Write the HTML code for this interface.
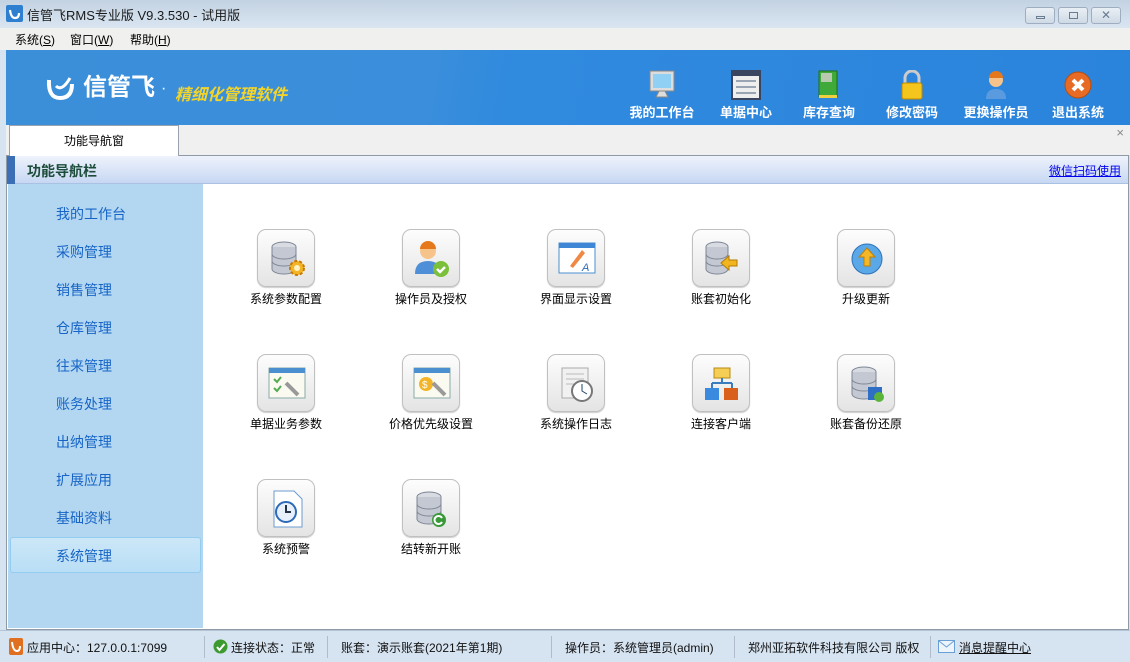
<!DOCTYPE html>
<html><head><meta charset="utf-8"><style>
*{margin:0;padding:0;box-sizing:border-box}
body{width:1130px;height:662px;overflow:hidden;background:#d6e3f1;font-family:"Liberation Sans","Noto Sans CJK SC",sans-serif;font-size:12px;position:relative}
.abs{position:absolute}
#title{left:0;top:0;width:1130px;height:28px;background:linear-gradient(#c3d2e2,#d9e5f1)}
#title .t{left:27px;top:5px;font-size:13px;color:#1a1a1a}
.wb{top:7px;height:17px;border:1px solid #9eadbf;border-radius:3px;background:linear-gradient(#e9eff5,#cfdae6)}
#menu{left:0;top:28px;width:1130px;height:22px;background:#f0f0ee}
#menu span{position:absolute;top:3px;font-size:12px;color:#000}
#banner{left:6px;top:50px;width:1124px;height:75px;background:linear-gradient(100deg,#3b8fd9 0%,#3a8edb 38%,#308ade 45%,#2b84dc 100%)}
.tb{position:absolute;top:20px;width:80px;text-align:center;color:#fff;font-weight:bold;font-size:13px}
.tb svg{display:block;margin:0 auto 2px}
#tabs{left:6px;top:125px;width:1124px;height:30px;background:#f0f0f0}
#tab{left:9px;top:125px;width:170px;height:31px;background:#fff;border:1px solid #9aa3ad;border-bottom:none;text-align:center;line-height:31px;font-size:12px}
#panel{left:6px;top:155px;width:1123px;height:475px;background:#fff;border:1px solid #8e9aa6}
#hdr{left:7px;top:156px;width:1121px;height:28px;background:linear-gradient(#eef3fc,#c7d8f3);border-bottom:1px solid #a9c1e2}
#hdr .bar{left:0;top:0;width:8px;height:28px;background:#3b6eb5}
#hdr .t{left:20px;top:5px;font-size:14px;font-weight:bold;color:#1c4c3a}
#hdr a{position:absolute;right:7px;top:6px;color:#0000ee;font-size:12px;text-decoration:underline}
#side{left:8px;top:184px;width:195px;height:444px;background:#b3d7f1}
#side div{position:absolute;left:48px;font-size:14px;color:#1764c6}
#sel{left:10px;top:537px;width:191px;height:36px;border:1px solid #94ccef;border-radius:3px;background:linear-gradient(#cce7f7,#b9def6)}
.ic{position:absolute;width:58px;height:58px;border:1px solid #c0c0c0;border-radius:9px;background:linear-gradient(#fdfdfd,#e4e4e4);box-shadow:0 1px 1px #ccc}
.ic svg{position:absolute;left:8px;top:8px}
.lb{position:absolute;width:140px;text-align:center;font-size:12px;color:#000}
#status{left:0;top:630px;width:1130px;height:32px;background:#d6e3f1;border-top:1px solid #b5c4d4}
#status span{position:absolute;top:8px;font-size:12px;color:#111}
.sep{position:absolute;top:5px;width:1px;height:22px;background:#b0bccb}
</style></head><body>
<div id="title" class="abs">
<svg class="abs" style="left:6px;top:5px" width="17" height="17"><rect width="17" height="17" rx="2" fill="#2f7fd0"/><path d="M4 5 Q5 13 9 13 Q13 13 13 8" stroke="#fff" stroke-width="2.2" fill="none"/></svg>
<div class="abs t">信管飞RMS专业版 V9.3.530 - 试用版</div>
<div class="abs wb" style="left:1025px;width:30px"><div class="abs" style="left:10px;top:8px;width:9px;height:3px;border:1px solid #6b7c90"></div></div>
<div class="abs wb" style="left:1058px;width:30px"><div class="abs" style="left:10px;top:4px;width:9px;height:7px;border:1px solid #6b7c90"></div></div>
<div class="abs wb" style="left:1091px;width:30px;text-align:center;color:#6b7c90;font-size:12px;line-height:15px">✕</div>
</div>
<div id="menu" class="abs"><span style="left:15px">系统(<u>S</u>)</span><span style="left:70px">窗口(<u>W</u>)</span><span style="left:130px">帮助(<u>H</u>)</span></div>
<div id="banner" class="abs">
<svg class="abs" style="left:40px;top:24px" width="30" height="28"><path d="M3 6 Q2 24 14 24 Q26 24 26 10" stroke="#fff" stroke-width="4" fill="none"/><path d="M10 12 Q16 18 24 4" stroke="#fff" stroke-width="3" fill="none"/></svg>
<div class="abs" style="left:77px;top:24px;color:#fff;font-size:24px;font-weight:bold;line-height:28px">信管飞</div>
<div class="abs" style="left:155px;top:30px;color:#fff;font-size:16px">·</div>
<div class="abs" style="left:169px;top:31px;color:#f3d42a;font-size:16px;font-style:italic;font-weight:bold">精细化管理软件</div>
<div class="tb" style="left:616px"><svg width="28" height="30"><rect x="2" y="1" width="24" height="20" fill="#ddd" stroke="#888"/><rect x="5" y="4" width="18" height="14" fill="#8fd0f4"/><path d="M8 27 h12 l-3 -6 h-6z" fill="#ddd" stroke="#888"/></svg>我的工作台</div>
<div class="tb" style="left:700px"><svg width="30" height="30"><rect x="1" y="1" width="28" height="28" fill="#eee" stroke="#3a4660" stroke-width="2"/><rect x="1" y="1" width="28" height="5" fill="#3a4660"/><path d="M5 11h20M5 17h20M5 23h20" stroke="#9aa5b3" stroke-width="2"/></svg>单据中心</div>
<div class="tb" style="left:783px"><svg width="24" height="30"><rect x="2" y="1" width="18" height="26" fill="#3faa3a" stroke="#1f6d1c"/><rect x="4" y="3" width="11" height="9" fill="#b9c9b0"/><rect x="2" y="25" width="18" height="3" fill="#f0d040"/></svg>库存查询</div>
<div class="tb" style="left:866px"><svg width="24" height="30"><path d="M5 14 V8 a7 7 0 0 1 14 0 V14" stroke="#ccc" stroke-width="3" fill="none"/><rect x="2" y="13" width="20" height="16" rx="2" fill="#f4c51c" stroke="#c08a00"/></svg>修改密码</div>
<div class="tb" style="left:950px"><svg width="24" height="30"><circle cx="12" cy="10" r="7" fill="#f6c48a"/><path d="M5 8 a7 7 0 0 1 14 0 z" fill="#e5781a"/><path d="M2 29 q0 -10 10 -10 q10 0 10 10z" fill="#5a9be0"/></svg>更换操作员</div>
<div class="tb" style="left:1032px"><svg width="30" height="30"><circle cx="15" cy="15" r="13" fill="#e76b24" stroke="#b04e14"/><path d="M10 10 l10 10 M20 10 l-10 10" stroke="#fff" stroke-width="4"/></svg>退出系统</div>
</div>
<div id="tabs" class="abs"><div class="abs" style="right:6px;top:0;color:#888;font-size:13px">×</div></div>
<div id="panel" class="abs"></div>
<div id="tab" class="abs">功能导航窗</div>
<div id="hdr" class="abs"><div class="abs bar"></div><div class="abs t">功能导航栏</div><a>微信扫码使用</a></div>
<div id="side" class="abs">
<div style="top:20px">我的工作台</div><div style="top:58px">采购管理</div><div style="top:96px">销售管理</div><div style="top:134px">仓库管理</div><div style="top:172px">往来管理</div><div style="top:210px">账务处理</div><div style="top:248px">出纳管理</div><div style="top:286px">扩展应用</div><div style="top:324px">基础资料</div>
</div>
<div id="sel" class="abs"></div>
<div class="abs" style="left:56px;top:546px;font-size:14px;color:#1764c6">系统管理</div>

<div class="ic" style="left:257px;top:229px"><svg width="42" height="42"><ellipse cx="18" cy="9" rx="12" ry="5" fill="#d8dbe2" stroke="#7d8594"/><path d="M6 9v22a12 5 0 0 0 24 0V9" fill="#c4c8d2" stroke="#7d8594"/><path d="M6 16a12 5 0 0 0 24 0M6 23a12 5 0 0 0 24 0" stroke="#7d8594" fill="none"/><circle cx="31" cy="30" r="7" fill="#f3b527" stroke="#c77a00" stroke-width="2" stroke-dasharray="3 2"/><circle cx="31" cy="30" r="3" fill="#fff3c4"/></svg></div>
<div class="lb" style="left:216px;top:290px">系统参数配置</div>
<div class="ic" style="left:402px;top:229px"><svg width="42" height="42"><circle cx="17" cy="13" r="8" fill="#f6c48a"/><path d="M9 11a8 8 0 0 1 16 0z" fill="#e5781a"/><path d="M4 36q0-13 13-13q13 0 13 13z" fill="#4f8fd8"/><circle cx="30" cy="31" r="8" fill="#7bbf3a"/><path d="M26 31l3 3 5-5" stroke="#fff" stroke-width="2.5" fill="none"/></svg></div>
<div class="lb" style="left:361px;top:290px">操作员及授权</div>
<div class="ic" style="left:547px;top:229px"><svg width="42" height="42"><rect x="3" y="5" width="36" height="30" fill="#fff" stroke="#4a8fd0"/><rect x="3" y="5" width="36" height="5" fill="#3f86d6"/><path d="M14 28l12-16 3 3-12 15z" fill="#e84" /><text x="26" y="33" font-size="11" fill="#2c6ab8" font-style="italic">A</text></svg></div>
<div class="lb" style="left:506px;top:290px">界面显示设置</div>
<div class="ic" style="left:692px;top:229px"><svg width="42" height="42"><ellipse cx="16" cy="9" rx="11" ry="5" fill="#d8dbe2" stroke="#7d8594"/><path d="M5 9v22a11 5 0 0 0 22 0V9" fill="#c4c8d2" stroke="#7d8594"/><path d="M5 16a11 5 0 0 0 22 0M5 23a11 5 0 0 0 22 0" stroke="#7d8594" fill="none"/><path d="M20 25l8-7v4h8v6h-8v4z" fill="#f2b51f" stroke="#b47c00"/></svg></div>
<div class="lb" style="left:651px;top:290px">账套初始化</div>
<div class="ic" style="left:837px;top:229px"><svg width="42" height="42"><circle cx="21" cy="21" r="15" fill="#5aa8e8" stroke="#2d72b8"/><path d="M21 10l8 9h-5v9h-6v-9h-5z" fill="#f5b72a" stroke="#c07f00"/></svg></div>
<div class="lb" style="left:796px;top:290px">升级更新</div>
<div class="ic" style="left:257px;top:354px"><svg width="42" height="42"><rect x="3" y="5" width="36" height="30" fill="#fafaf0" stroke="#8aa"/><rect x="3" y="5" width="36" height="5" fill="#4a8fd0"/><path d="M8 16l3 3 4-5M8 25l3 3 4-5" stroke="#5a5" stroke-width="2" fill="none"/><path d="M20 20l12 12" stroke="#999" stroke-width="4"/></svg></div>
<div class="lb" style="left:216px;top:415px">单据业务参数</div>
<div class="ic" style="left:402px;top:354px"><svg width="42" height="42"><rect x="3" y="5" width="36" height="30" fill="#fafaf0" stroke="#8aa"/><rect x="3" y="5" width="36" height="5" fill="#4a8fd0"/><circle cx="15" cy="21" r="7" fill="#f3b527"/><text x="11" y="25" font-size="10" fill="#fff">$</text><path d="M22 20l12 12" stroke="#999" stroke-width="4"/></svg></div>
<div class="lb" style="left:361px;top:415px">价格优先级设置</div>
<div class="ic" style="left:547px;top:354px"><svg width="42" height="42"><rect x="6" y="5" width="26" height="30" fill="#f1f1f1" stroke="#aaa"/><path d="M10 11h18M10 16h18M10 21h10" stroke="#bbb"/><circle cx="26" cy="28" r="10" fill="#fff" stroke="#777" stroke-width="2"/><path d="M26 21v7l5 3" stroke="#246" fill="none"/></svg></div>
<div class="lb" style="left:506px;top:415px">系统操作日志</div>
<div class="ic" style="left:692px;top:354px"><svg width="42" height="42"><rect x="13" y="5" width="16" height="10" fill="#f5cf55" stroke="#b98a10"/><path d="M21 15v5M11 20h20M11 20v5M31 20v5" stroke="#3a7cc0" stroke-width="2" fill="none"/><rect x="4" y="25" width="14" height="12" fill="#3a8ae0"/><rect x="23" y="25" width="14" height="12" fill="#d9601c"/></svg></div>
<div class="lb" style="left:651px;top:415px">连接客户端</div>
<div class="ic" style="left:837px;top:354px"><svg width="42" height="42"><ellipse cx="18" cy="9" rx="12" ry="5" fill="#d8dbe2" stroke="#7d8594"/><path d="M6 9v22a12 5 0 0 0 24 0V9" fill="#c4c8d2" stroke="#7d8594"/><path d="M6 16a12 5 0 0 0 24 0M6 23a12 5 0 0 0 24 0" stroke="#7d8594" fill="none"/><rect x="22" y="24" width="14" height="13" fill="#2e6fc5"/><circle cx="33" cy="34" r="5" fill="#5bb33a"/></svg></div>
<div class="lb" style="left:796px;top:415px">账套备份还原</div>
<div class="ic" style="left:257px;top:479px"><svg width="42" height="42"><path d="M8 3h20l8 8v28H8z" fill="#fff" stroke="#6c9bd0"/><circle cx="20" cy="24" r="10" fill="#e8f1fb" stroke="#2d6ab8" stroke-width="2"/><path d="M20 17v7h5" stroke="#234" stroke-width="2" fill="none"/></svg></div>
<div class="lb" style="left:216px;top:540px">系统预警</div>
<div class="ic" style="left:402px;top:479px"><svg width="42" height="42"><ellipse cx="18" cy="9" rx="12" ry="5" fill="#d8dbe2" stroke="#7d8594"/><path d="M6 9v22a12 5 0 0 0 24 0V9" fill="#c4c8d2" stroke="#7d8594"/><path d="M6 16a12 5 0 0 0 24 0M6 23a12 5 0 0 0 24 0" stroke="#7d8594" fill="none"/><circle cx="28" cy="32" r="7" fill="#3a9a3a"/><path d="M31 30a4 4 0 1 0 0 4" stroke="#fff" stroke-width="2" fill="none"/></svg></div>
<div class="lb" style="left:361px;top:540px">结转新开账</div>

<div id="status" class="abs">
<svg class="abs" style="left:9px;top:7px" width="14" height="17"><rect width="14" height="17" rx="2" fill="#e0701f"/><path d="M3 4q1 9 5 9q3 0 3-5" stroke="#fff" stroke-width="2" fill="none"/></svg>
<span style="left:27px">应用中心：127.0.0.1:7099</span>
<div class="sep" style="left:204px"></div>
<svg class="abs" style="left:213px;top:8px" width="15" height="15"><circle cx="7.5" cy="7.5" r="7" fill="#3c9a2e"/><path d="M4 8l2.5 3 5-6" stroke="#fff" stroke-width="2" fill="none"/></svg>
<span style="left:231px">连接状态：正常</span>
<div class="sep" style="left:327px"></div>
<span style="left:341px">账套：演示账套(2021年第1期)</span>
<div class="sep" style="left:551px"></div>
<span style="left:565px">操作员：系统管理员(admin)</span>
<div class="sep" style="left:734px"></div>
<span style="left:748px">郑州亚拓软件科技有限公司 版权</span>
<div class="sep" style="left:930px"></div>
<svg class="abs" style="left:938px;top:9px" width="17" height="13"><rect x=".5" y=".5" width="16" height="12" fill="#eef4fb" stroke="#6a9fd6"/><path d="M1 1l7.5 6 7.5-6" stroke="#6a9fd6" fill="none"/></svg>
<span style="left:959px;text-decoration:underline">消息提醒中心</span>
</div>
</body></html>
